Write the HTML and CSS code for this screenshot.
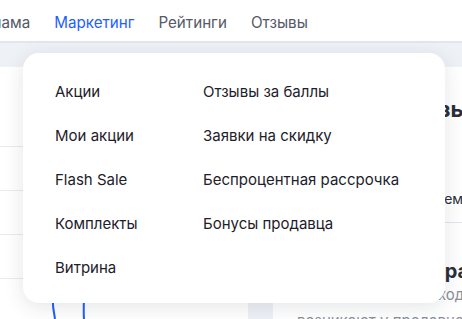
FILE: index.html
```html
<!DOCTYPE html>
<html lang="ru">
<head>
    <meta charset="UTF-8">
    <meta name="viewport" content="width=device-width, initial-scale=1.0">
    <title>Маркетинг</title>
    <link rel="stylesheet" href="styles.css">
</head>
<body>
    <div class="topbar">
        <nav class="nav">
            <a href="#">Реклама</a>
            <a href="#" class="active">Маркетинг</a>
            <a href="#">Рейтинги</a>
            <a href="#">Отзывы</a>
        </nav>
    </div>

    <div class="page">
        <div class="card left">
            <div class="row"></div>
            <div class="row"></div>
            <div class="row"></div>
            <div class="row"></div>
            <div class="row chart">
                <svg width="60" height="40" viewBox="0 0 60 40">
                    <path d="M30 2 C26 14 28 30 30 40" fill="none" stroke="#1f5eff" stroke-width="2"/>
                    <path d="M58 2 C60 14 58 30 59 40" fill="none" stroke="#1f5eff" stroke-width="2"/>
                </svg>
            </div>
        </div>
        <div class="card right">
            <h2 class="title">Оценки и отзывы</h2>
            <div class="line">Ответы покупателям по всему</div>
            <h3 class="sub">Бонусная программа</h3>
            <p class="text first">Помогает снизить рост расходов</p>
            <p class="text">возникают у продавцов</p>
        </div>
    </div>

    <div class="dropdown">
        <div class="menu">
            <a href="#">Акции</a>
            <a href="#">Отзывы за баллы</a>
            <a href="#">Мои акции</a>
            <a href="#">Заявки на скидку</a>
            <a href="#">Flash Sale</a>
            <a href="#">Беспроцентная рассрочка</a>
            <a href="#">Комплекты</a>
            <a href="#">Бонусы продавца</a>
            <a href="#">Витрина</a>
        </div>
    </div>
</body>
</html>
```

FILE: styles.css
```css
body {
    margin: 0;
    padding: 0;
    font-family: Inter, "Noto Sans", sans-serif;
    background-color: #eef1f6;
    overflow: hidden;
    height: 319px;
}

.topbar {
    background-color: white;
    height: 43px;
    border-bottom: 2px solid #e1e5ec;
    box-sizing: border-box;
}

.nav {
    display: flex;
    gap: 24px;
    margin-left: -34px;
    height: 41px;
    align-items: center;
    padding-top: 2px;
}

.nav a {
    font-size: 15.2px;
    color: #555a66;
    text-decoration: none;
    white-space: nowrap;
}

.nav a.active {
    color: #1f5eff;
}

.page {
    display: grid;
    grid-template-columns: 248px 1fr;
    gap: 25px;
    margin-top: 24px;
}

.card {
    background-color: white;
    height: 260px;
}

.left .row {
    height: 43px;
    border-bottom: 1px solid #e8ebf0;
}

.left .row:first-child {
    height: 79px;
}

.left .chart {
    border-bottom: none;
    padding-left: 25px;
}

.right {
    padding-left: 24px;
    overflow: hidden;
    white-space: nowrap;
}

.title {
    font-size: 22px;
    font-weight: 700;
    color: #2b2f3a;
    margin: 29px 0 0 9px;
}

.line {
    font-size: 14px;
    color: #2b2f3a;
    padding: 68px 0 15px;
    border-bottom: 1px solid #e1e5ec;
    text-indent: -37px;
}

.sub {
    font-size: 20px;
    font-weight: 700;
    color: #2b2f3a;
    margin: 36px 0 0;
}

.text {
    font-size: 15px;
    color: #8a8f99;
    margin: 0;
    line-height: 18px;
}

.text.first {
    margin: 3px 0 8px;
    text-indent: -61px;
}

.dropdown {
    position: absolute;
    top: 53px;
    left: 23px;
    width: 422px;
    height: 250px;
    box-sizing: border-box;
    background-color: white;
    border-radius: 16px;
    box-shadow: 0 4px 20px rgba(30, 40, 60, 0.12);
    padding: 16px 0 0 32px;
}

.menu {
    display: grid;
    grid-template-columns: 148px auto;
    grid-auto-rows: 44px;
    align-items: center;
}

.menu a {
    font-size: 15px;
    color: #1d2129;
    text-decoration: none;
}
```
